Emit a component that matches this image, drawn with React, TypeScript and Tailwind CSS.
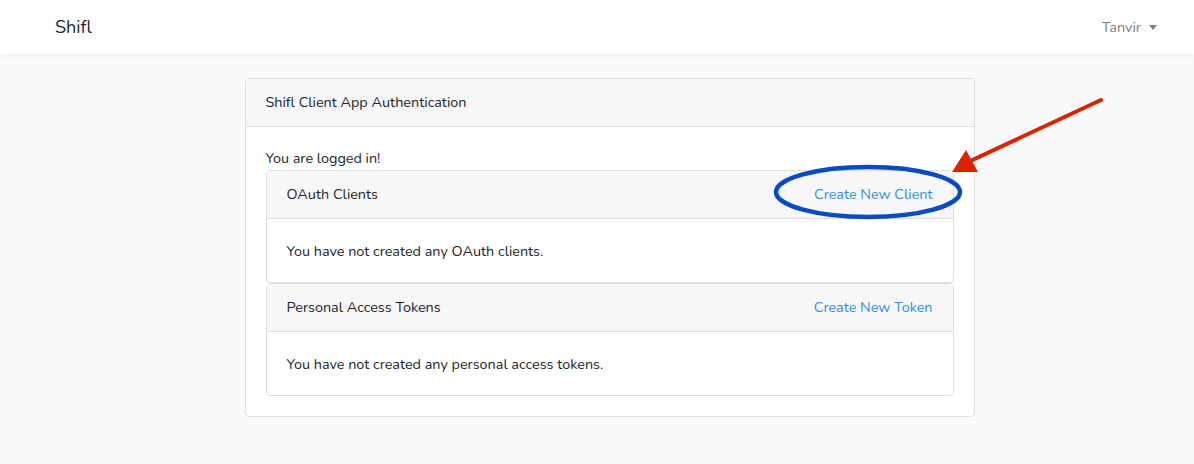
import type { ReactNode } from "react";

const FONT = { fontFamily: '"Nunito", "Lato", "Noto Sans", sans-serif' };

function InnerCard({ title, action, children }: { title: string; action: string; children: ReactNode }) {
  return (
    <div className="rounded border border-[#dfdfdf] bg-white">
      <div className="flex h-[48px] items-center justify-between border-b border-[#dfdfdf] bg-[#f7f7f7] px-5">
        <span>{title}</span>
        <a className="text-[#3490dc]">{action}</a>
      </div>
      <div className="flex h-[63px] items-center px-5 pt-[1px]">{children}</div>
    </div>
  );
}

export default function App() {
  return (
    <div className="relative min-h-[464px] bg-[#f8fafc] text-[14.4px] leading-[23px] text-[#212529]" style={FONT}>
      <nav className="flex h-[54px] items-center justify-between bg-white pl-[55px] pr-[37px] shadow-[0_2px_4px_rgba(0,0,0,0.04)]">
        <span className="text-[18px]">Shifl</span>
        <span className="flex items-center gap-2 text-[#808080]">
          Tanvir
          <span className="mt-[1px] h-0 w-0 border-x-[4px] border-t-[5px] border-x-transparent border-t-[#808080]" />
        </span>
      </nav>

      <div className="flex justify-center pt-[24px]">
        <div className="ml-[25px] w-[730px] rounded border border-[#dfdfdf] bg-white">
          <div className="flex h-[48px] items-center border-b border-[#dfdfdf] bg-[#f7f7f7] px-5">
            Shifl Client App Authentication
          </div>
          <div className="p-5">
            <div>You are logged in!</div>
            <div className="flex flex-col">
              <InnerCard title="OAuth Clients" action="Create New Client">
                You have not created any OAuth clients.
              </InnerCard>
              <InnerCard title="Personal Access Tokens" action="Create New Token">
                You have not created any personal access tokens.
              </InnerCard>
            </div>
          </div>
        </div>
      </div>

      {/* annotation overlay: ellipse around the link, red arrow pointing at it */}
      <svg className="pointer-events-none absolute left-0 top-0" width="1194" height="464">
        <ellipse cx="868" cy="192" rx="92" ry="25" fill="none" stroke="#0a4bc4" strokeWidth="4.5" />
        <line x1="1101" y1="100" x2="966" y2="163" stroke="#dd2200" strokeWidth="4" strokeLinecap="round" />
        <polygon points="952,172 966,150 978,172" fill="#dd2200" />
      </svg>
    </div>
  );
}
